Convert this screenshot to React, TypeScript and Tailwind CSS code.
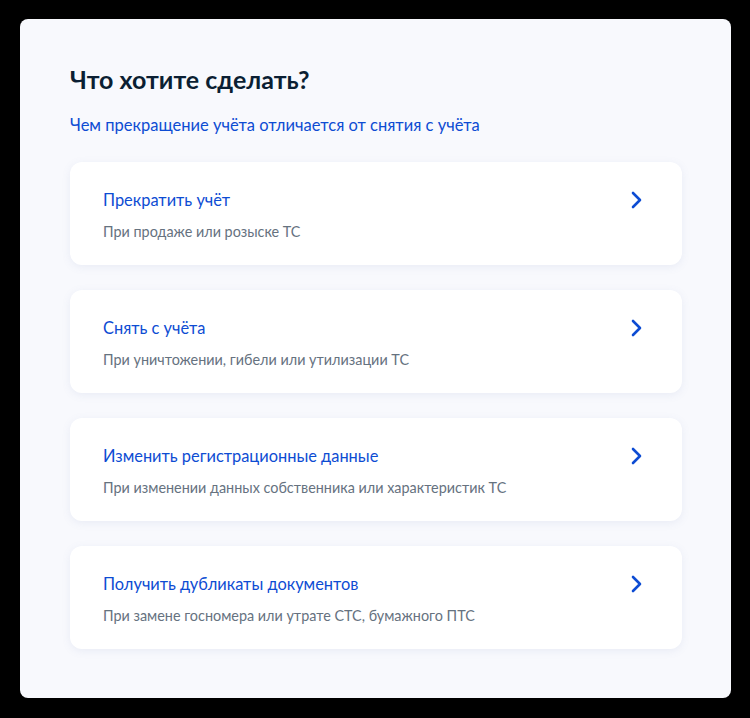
const items = [
  { title: "Прекратить учёт", desc: "При продаже или розыске ТС" },
  { title: "Снять с учёта", desc: "При уничтожении, гибели или утилизации ТС" },
  { title: "Изменить регистрационные данные", desc: "При изменении данных собственника или характеристик ТС" },
  { title: "Получить дубликаты документов", desc: "При замене госномера или утрате СТС, бумажного ПТС" },
]

function Chevron() {
  return (
    <svg width="12" height="18" viewBox="0 0 12 18" fill="none" className="shrink-0">
      <path d="M3 2l7 7-7 7" stroke="#0d4cd3" strokeWidth="2.6" strokeLinecap="round" strokeLinejoin="round" />
    </svg>
  )
}

export default function App() {
  return (
    <div className="h-[718px] w-[750px] bg-black pt-[19px] pl-[20px] font-['Lato','Noto_Sans',sans-serif]">
      <div className="h-[679px] w-[711px] rounded-[8px] bg-[#f8f9fd] pl-[50px] pt-[43px]">
        <h1 className="text-[25px] font-bold leading-[34px] text-[#0b1f33]">Что хотите сделать?</h1>
        <a className="mt-[18px] block text-[16.5px] leading-[22px] text-[#0d4cd3]">
          Чем прекращение учёта отличается от снятия с учёта
        </a>
        <div className="mt-[26px] flex w-[612px] flex-col gap-[25px]">
          {items.map((it) => (
            <div
              key={it.title}
              className="flex h-[103px] items-start justify-between rounded-[12px] bg-white pl-[33px] pr-[40px] pt-[26px] shadow-[0_2px_8px_rgba(102,119,174,0.1)]"
            >
              <div className="flex flex-col">
                <div className="text-[16.4px] leading-[24px] text-[#0d4cd3]">{it.title}</div>
                <div className="mt-[10px] text-[14.4px] leading-[20px] text-[#66727f]">{it.desc}</div>
              </div>
              <div className="pt-[3px]">
                <Chevron />
              </div>
            </div>
          ))}
        </div>
      </div>
    </div>
  )
}
